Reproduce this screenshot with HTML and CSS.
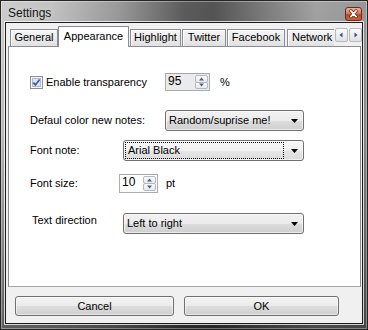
FILE: index.html
```html
<!DOCTYPE html>
<html>
<head>
<meta charset="utf-8">
<link rel="stylesheet" href="styles.css">
</head>
<body>
<div class="window">
  <div class="titlebar">
    <span class="title">Settings</span>
    <span class="close">
      <svg width="17" height="14" viewBox="0 0 17 14">
        <path d="M5.5 3.5 L11.5 10 M11.5 3.5 L5.5 10" stroke="#5a2414" stroke-width="3.6" stroke-linecap="round" fill="none"/>
        <path d="M5.5 3.5 L11.5 10 M11.5 3.5 L5.5 10" stroke="#ffffff" stroke-width="2" stroke-linecap="round" fill="none"/>
      </svg>
    </span>
  </div>
  <div class="client">
    <div class="tabrow">
      <div class="tabs">
        <div class="tab t-general">General</div>
        <div class="tab tab-active t-app">Appearance</div>
        <div class="tab t-high">Highlight</div>
        <div class="tab t-tw">Twitter</div>
        <div class="tab t-fb">Facebook</div>
        <div class="tab t-net">Network</div>
      </div>
      <div class="tab-arrows">
        <span class="tarrow"><svg width="11" height="12" viewBox="0 0 11 12"><path d="M6.5 3.5 L3.5 6 L6.5 8.5 Z" fill="#34508c"/></svg></span>
        <span class="tarrow"><svg width="11" height="12" viewBox="0 0 11 12"><path d="M4.5 3.5 L7.5 6 L4.5 8.5 Z" fill="#34508c"/></svg></span>
      </div>
    </div>
    <div class="page">
      <div class="row row-1">
        <span class="check">
          <svg width="13" height="13" viewBox="0 0 13 13">
            <rect x="0.5" y="0.5" width="12" height="12" fill="#f6f6f6" stroke="#8e8f8f"/>
            <rect x="2.5" y="2.5" width="8" height="8" fill="#dce4ef" stroke="#aebbcf"/>
            <path d="M3.3 6.6 L5.4 8.9 L9.6 3.4" stroke="#3f5a96" stroke-width="1.7" fill="none"/>
          </svg>
        </span>
        <span class="label w-enable">Enable transparency</span>
        <div class="spin spin-pct">
          <span class="spin-val">95</span>
          <span class="spin-btns">
            <span class="sb"><svg width="7" height="4" viewBox="0 0 7 4"><path d="M1 3.5 L3.5 0.5 L6 3.5 Z" fill="#4a5f8a"/></svg></span>
            <span class="sb"><svg width="7" height="4" viewBox="0 0 7 4"><path d="M1 0.5 L3.5 3.5 L6 0.5 Z" fill="#4a5f8a"/></svg></span>
          </span>
        </div>
        <span class="unit unit-pct">%</span>
      </div>

      <div class="row row-2">
        <span class="label w-color">Defaul color new notes:</span>
        <div class="combo combo-short">
          <span class="combo-text">Random/suprise me!</span>
          <svg class="combo-arrow" width="7" height="4" viewBox="0 0 7 4"><path d="M0 0 L7 0 L3.5 4 Z" fill="#000"/></svg>
        </div>
      </div>

      <div class="row row-3">
        <span class="label w-font">Font note:</span>
        <div class="combo combo-long combo-focus">
          <span class="combo-text focus-rect">Arial Black</span>
          <svg class="combo-arrow" width="7" height="4" viewBox="0 0 7 4"><path d="M0 0 L7 0 L3.5 4 Z" fill="#000"/></svg>
        </div>
      </div>

      <div class="row row-4">
        <span class="label w-size">Font size:</span>
        <div class="spin spin-size">
          <span class="spin-val">10</span>
          <span class="spin-btns">
            <span class="sb"><svg width="7" height="4" viewBox="0 0 7 4"><path d="M1 3.5 L3.5 0.5 L6 3.5 Z" fill="#4a5f8a"/></svg></span>
            <span class="sb"><svg width="7" height="4" viewBox="0 0 7 4"><path d="M1 0.5 L3.5 3.5 L6 0.5 Z" fill="#4a5f8a"/></svg></span>
          </span>
        </div>
        <span class="unit unit-pt">pt</span>
      </div>

      <div class="row row-5">
        <span class="label w-dir">Text direction</span>
        <div class="combo combo-long">
          <span class="combo-text">Left to right</span>
          <svg class="combo-arrow" width="7" height="4" viewBox="0 0 7 4"><path d="M0 0 L7 0 L3.5 4 Z" fill="#000"/></svg>
        </div>
      </div>
    </div>
    <div class="buttons">
      <button class="btn btn-cancel">Cancel</button>
      <button class="btn btn-ok">OK</button>
    </div>
  </div>
</div>
</body>
</html>
```

FILE: styles.css
```css
* { box-sizing: border-box; }

html, body {
  margin: 0;
  padding: 0;
  background: #ffffff;
}

body {
  font-family: "Liberation Sans", Arial, sans-serif;
  font-size: 11px;
  color: #000;
}

.window {
  width: 368px;
  height: 330px;
  border: 1px solid #262626;
  padding: 0 4px 5px 4px;
  display: flex;
  flex-direction: column;
  background:
    linear-gradient(180deg, rgba(0,0,0,0) 0%, rgba(0,0,0,0.1) 40%, rgba(0,0,0,0.55) 100%),
    linear-gradient(90deg, #cdcdcd 0%, #c3c3c3 14%, #9a9a9a 32%, #5c5c5c 50%, #545454 58%, #7c7c7c 72%, #a2a2a2 86%, #979797 100%);
  box-shadow: inset 0 0 0 1px rgba(255,255,255,0.35);
}

.titlebar {
  height: 21px;
  display: flex;
  align-items: flex-start;
  justify-content: space-between;
  padding-left: 3px;
}

.title {
  font-size: 12px;
  line-height: 14px;
  margin-top: 5px;
  color: #141414;
  text-shadow: 0 0 6px rgba(255,255,255,0.6);
}

.close {
  width: 17px;
  height: 14px;
  margin-top: 6px;
  margin-right: 1px;
  border: 1px solid #6e2a18;
  border-radius: 3px;
  background: linear-gradient(180deg, #eab2a2 0%, #d9785c 45%, #c4441f 55%, #d0603d 100%);
  display: flex;
  align-items: center;
  justify-content: center;
  overflow: hidden;
}

.close svg { display: block; }

.client {
  flex: 1;
  border: 1px solid #1c1c1c;
  background: #f0f0f0;
  box-shadow: 0 0 0 1px rgba(255,255,255,0.75);
  display: flex;
  flex-direction: column;
}

/* tabs */
.tabrow {
  display: flex;
  margin-top: 3px;
  height: 21px;
  padding-left: 4px;
  position: relative;
  z-index: 1;
}

.tabs {
  flex: 1;
  display: flex;
  align-items: flex-start;
  overflow: hidden;
  height: 21px;
}

.tab {
  flex: none;
  height: 17px;
  margin-top: 3px;
  margin-left: 1px;
  border: 1px solid #898c95;
  border-bottom: none;
  background: linear-gradient(180deg, #f4f4f4 0%, #ececec 50%, #e0e0e0 100%);
  box-shadow: inset 1px 1px 0 #ffffff;
  line-height: 15px;
  text-align: center;
  white-space: nowrap;
}

.tab-active {
  height: 21px;
  margin-top: 0;
  background: #ffffff;
  box-shadow: none;
  line-height: 13px;
  padding-top: 3px;
}

.t-general { width: 48px; margin-left: 0; }
.t-app { width: 71px; margin-left: 0; }
.t-high { width: 51px; }
.t-tw { width: 44px; }
.t-fb { width: 58px; }
.t-net { width: 52px; margin-left: 2px; text-align: left; padding-left: 4px; }

.tab-arrows {
  flex: none;
  display: flex;
  gap: 1px;
  margin-left: 1px;
  margin-top: 2px;
}

.tarrow {
  width: 13px;
  height: 14px;
  border: 1px solid #b9b9b9;
  border-radius: 2px;
  background: linear-gradient(180deg, #fbfbfb 0%, #ededed 50%, #e2e2e2 100%);
  display: flex;
  align-items: center;
  justify-content: center;
}

.tarrow svg { display: block; }

/* page */
.page {
  margin-top: -1px;
  margin-left: 2px;
  width: 353px;
  height: 241px;
  border: 1px solid #898c95;
  border-bottom-color: #a5a5a5;
  background: #ffffff;
}

.row {
  display: flex;
  align-items: center;
  padding-left: 21px;
}

.label {
  flex: none;
  line-height: 13px;
  white-space: nowrap;
}

.row-1 { margin-top: 26px; height: 18px; }
.row-2 { margin-top: 19px; height: 21px; }
.row-3 { margin-top: 9px; height: 21px; }
.row-4 { margin-top: 13px; height: 19px; }
.row-5 { margin-top: 20px; height: 21px; padding-left: 23px; align-items: flex-start; }

.check { flex: none; width: 13px; height: 13px; margin-right: 3px; }
.check svg { display: block; }

.w-enable { width: 119px; }
.w-color { width: 135px; }
.w-font { width: 93px; }
.w-size { width: 89px; }
.w-dir { width: 91px; margin-top: 1px; }

/* spin boxes */
.spin {
  flex: none;
  display: flex;
  border: 1px solid #abadb3;
  border-top-color: #a3a6ad;
}

.spin-pct { width: 45px; height: 18px; background: #ebebeb; }
.spin-size { width: 39px; height: 19px; background: #ffffff; }

.spin-val {
  flex: 1;
  padding-left: 2px;
  line-height: 15px;
  font-size: 12px;
}

.spin-btns {
  flex: none;
  width: 14px;
  display: flex;
  flex-direction: column;
  padding: 1px 1px 1px 0;
  gap: 0;
}

.sb {
  flex: 1;
  border: 1px solid #b4b8c0;
  border-radius: 2px;
  background: linear-gradient(180deg, #fafafa 0%, #e8e9ec 100%);
  display: flex;
  align-items: center;
  justify-content: center;
}

.sb + .sb { margin-top: -1px; }
.sb svg { display: block; }

.unit { flex: none; line-height: 13px; }
.unit-pct { margin-left: 10px; }
.unit-pt { margin-left: 8px; }

/* combo boxes */
.combo {
  flex: none;
  height: 21px;
  display: flex;
  align-items: center;
  border: 1px solid #707070;
  border-radius: 3px;
  background: linear-gradient(180deg, #f2f2f2 0%, #ebebeb 50%, #dddddd 51%, #cfcfcf 100%);
  box-shadow: inset 0 0 0 1px rgba(255,255,255,0.6);
  padding: 0 5px 0 3px;
}

.combo-short { width: 139px; }
.combo-long { width: 181px; }

.combo-focus {
  background: linear-gradient(180deg, #f8f8f8 0%, #f0f0f0 50%, #e6e6e6 51%, #dcdcdc 100%);
  padding-left: 1px;
}

.combo-text {
  flex: 1;
  line-height: 13px;
  white-space: nowrap;
}

.focus-rect {
  height: 17px;
  line-height: 15px;
  padding-left: 2px;
  border: 1px dotted #000;
  margin-right: 7px;
}

.combo-arrow { flex: none; display: block; }

/* bottom buttons */
.buttons {
  display: flex;
  padding: 9px 0 0 9px;
  gap: 10px;
}

.btn {
  height: 20px;
  border: 1px solid #707070;
  border-radius: 3px;
  background: linear-gradient(180deg, #f2f2f2 0%, #ebebeb 50%, #dddddd 51%, #cfcfcf 100%);
  box-shadow: inset 0 0 0 1px rgba(255,255,255,0.5);
  font-family: "Liberation Sans", Arial, sans-serif;
  font-size: 11px;
  color: #000;
  padding: 0;
  line-height: 16px;
}

.btn-cancel { width: 159px; }
.btn-ok { width: 155px; }
```
